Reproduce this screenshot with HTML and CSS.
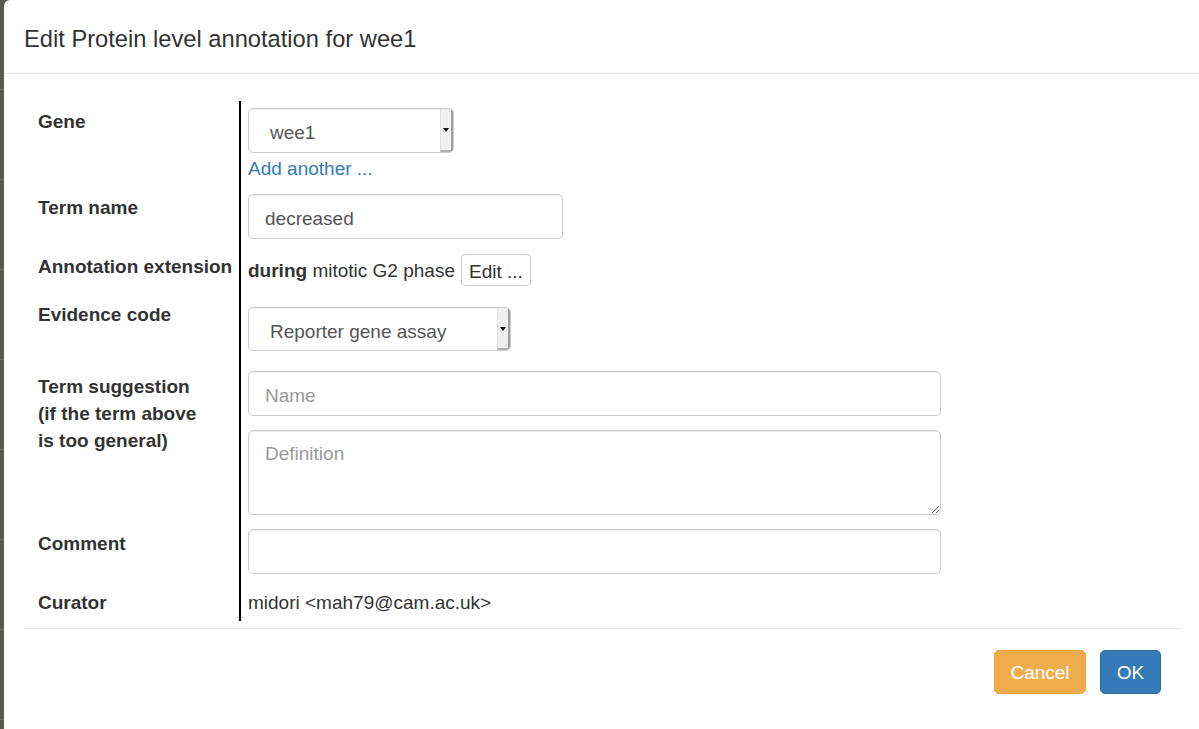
FILE: index.html
```html
<!DOCTYPE html>
<html>
<head>
<meta charset="utf-8">
<link rel="stylesheet" href="styles.css">
</head>
<body>
<div class="backdrop">
  <div class="modal">
    <div class="modal-header">
      <h4 class="modal-title">Edit Protein level annotation for wee1</h4>
    </div>
    <div class="modal-body">
      <div class="form-grid">
        <div class="label">Gene</div>
        <div class="field field-gene">
          <div class="select select-gene"><span class="select-text">wee1</span><span class="select-arrow"></span></div>
          <a class="add-link" href="#">Add another ...</a>
        </div>

        <div class="label">Term name</div>
        <div class="field field-term">
          <input class="input input-term" type="text" value="decreased">
        </div>

        <div class="label">Annotation extension</div>
        <div class="field ext-row">
          <span><b>during</b> mitotic G2 phase</span>
          <button class="btn btn-default">Edit ...</button>
        </div>

        <div class="label">Evidence code</div>
        <div class="field">
          <div class="select select-evidence"><span class="select-text">Reporter gene assay</span><span class="select-arrow"></span></div>
        </div>

        <div class="label label-suggest">Term suggestion<br>(if the term above<br>is too general)</div>
        <div class="field suggest">
          <input class="input input-wide" type="text" placeholder="Name">
          <textarea class="input input-wide textarea" placeholder="Definition"></textarea>
        </div>

        <div class="label label-comment">Comment</div>
        <div class="field">
          <input class="input input-wide" type="text">
        </div>

        <div class="label label-curator">Curator</div>
        <div class="field curator">midori &lt;mah79@cam.ac.uk&gt;</div>
      </div>
      <div class="divider"></div>
      <div class="modal-footer">
        <button class="btn btn-warning">Cancel</button>
        <button class="btn btn-primary">OK</button>
      </div>
    </div>
  </div>
</div>
</body>
</html>
```

FILE: styles.css
```css
* { box-sizing: border-box; }
html, body {
  margin: 0;
  padding: 0;
  height: 100%;
  overflow: hidden;
}
body {
  background: #5a5a54;
  font-family: "Liberation Sans", Arial, sans-serif;
  font-size: 19px;
  line-height: 27px;
  color: #333;
}
.backdrop {
  height: 100%;
  padding-left: 4px;
  background: repeating-linear-gradient(to bottom, #5a5a54 0, #5a5a54 89px, #6a6a66 89px, #6a6a66 90px);
}
.modal {
  width: 1198px;
  height: 100%;
  background: #fff;
  border-top-left-radius: 6px;
}
.modal-header {
  padding: 24px 20px 18px 20px;
  border-bottom: 1px solid #e5e5e5;
}
.modal-title {
  margin: 0;
  font-size: 23.7px;
  line-height: 31px;
  font-weight: normal;
  color: #333;
}
.modal-body {
  padding: 27px 20px 0 20px;
}
.form-grid {
  display: grid;
  grid-template-columns: 215px 1fr;
}
.label {
  padding: 7px 0 7px 14px;
  font-weight: bold;
  line-height: 27px;
}
.field {
  border-left: 2px solid #000;
  padding: 7px 0 7px 7px;
}
.field-gene { padding-bottom: 4px; }
.field-term { padding-bottom: 7px; }
.select {
  display: flex;
  height: 44px;
  border: 1px solid #ccc;
  border-radius: 5px;
  box-shadow: inset 0 1px 1px rgba(0,0,0,.075);
  overflow: hidden;
  color: #555;
}
.select-gene { width: 206px; height: 45px; }
.select-evidence { width: 263px; margin: 6px 0 6px; }
.select-text {
  flex: 1;
  padding: 10px 0 0 21px;
}
.select-arrow {
  width: 13px;
  background: #f0f0f0;
  border-left: 1px solid #e0e0e0;
  border-right: 2px solid #a0a0a0;
  border-bottom: 2px solid #b0b0b0;
  position: relative;
}
.select-arrow::after {
  content: "";
  position: absolute;
  left: 2px;
  top: 19px;
  border-left: 3px solid transparent;
  border-right: 3px solid transparent;
  border-top: 4px solid #111;
}
.add-link {
  display: block;
  color: #337ab7;
  text-decoration: none;
  line-height: 28px;
  padding-top: 2px;
}
.input {
  display: block;
  height: 45px;
  border: 1px solid #ccc;
  border-radius: 5px;
  box-shadow: inset 0 1px 1px rgba(0,0,0,.075);
  font-family: "Liberation Sans", Arial, sans-serif;
  font-size: 19px;
  color: #555;
  padding: 10px 16px 6px;
  background: #fff;
}
.input::placeholder { color: #999; }
.input-term { width: 315px; }
.input-wide { width: 693px; }
.suggest { display: flex; flex-direction: column; gap: 14px; padding-bottom: 7px; }
.textarea {
  height: 85px;
  resize: vertical;
  line-height: 27px;
  padding: 9px 16px;
}
.ext-row {
  display: flex;
  align-items: center;
  gap: 6px;
  padding-top: 8px;
  padding-bottom: 8px;
}
.btn {
  font-family: "Liberation Sans", Arial, sans-serif;
  font-size: 19px;
  line-height: 27px;
  border: 1px solid transparent;
  border-radius: 5px;
  cursor: pointer;
}
.btn-default {
  background: #fff;
  border-color: #ccc;
  color: #333;
  height: 32px;
  padding: 2px 7px 0;
  border-radius: 4px;
}
.label-suggest { padding-top: 9px; }
.label-comment { padding-top: 8px; }
.label-curator { padding-top: 8px; padding-bottom: 5px; }
.curator {
  padding-top: 8px;
  padding-bottom: 5px;
}
.divider {
  border-top: 1px solid #e5e5e5;
  margin-top: 7px;
}
.modal-footer {
  display: flex;
  justify-content: flex-end;
  gap: 14px;
  padding: 21px 21px 0 0;
}
.btn-warning {
  background: #f0ad4e;
  border-color: #eea236;
  color: #fff;
  height: 44px;
  width: 92px;
}
.btn-primary {
  background: #337ab7;
  border-color: #2e6da4;
  color: #fff;
  height: 44px;
  width: 61px;
}
```
